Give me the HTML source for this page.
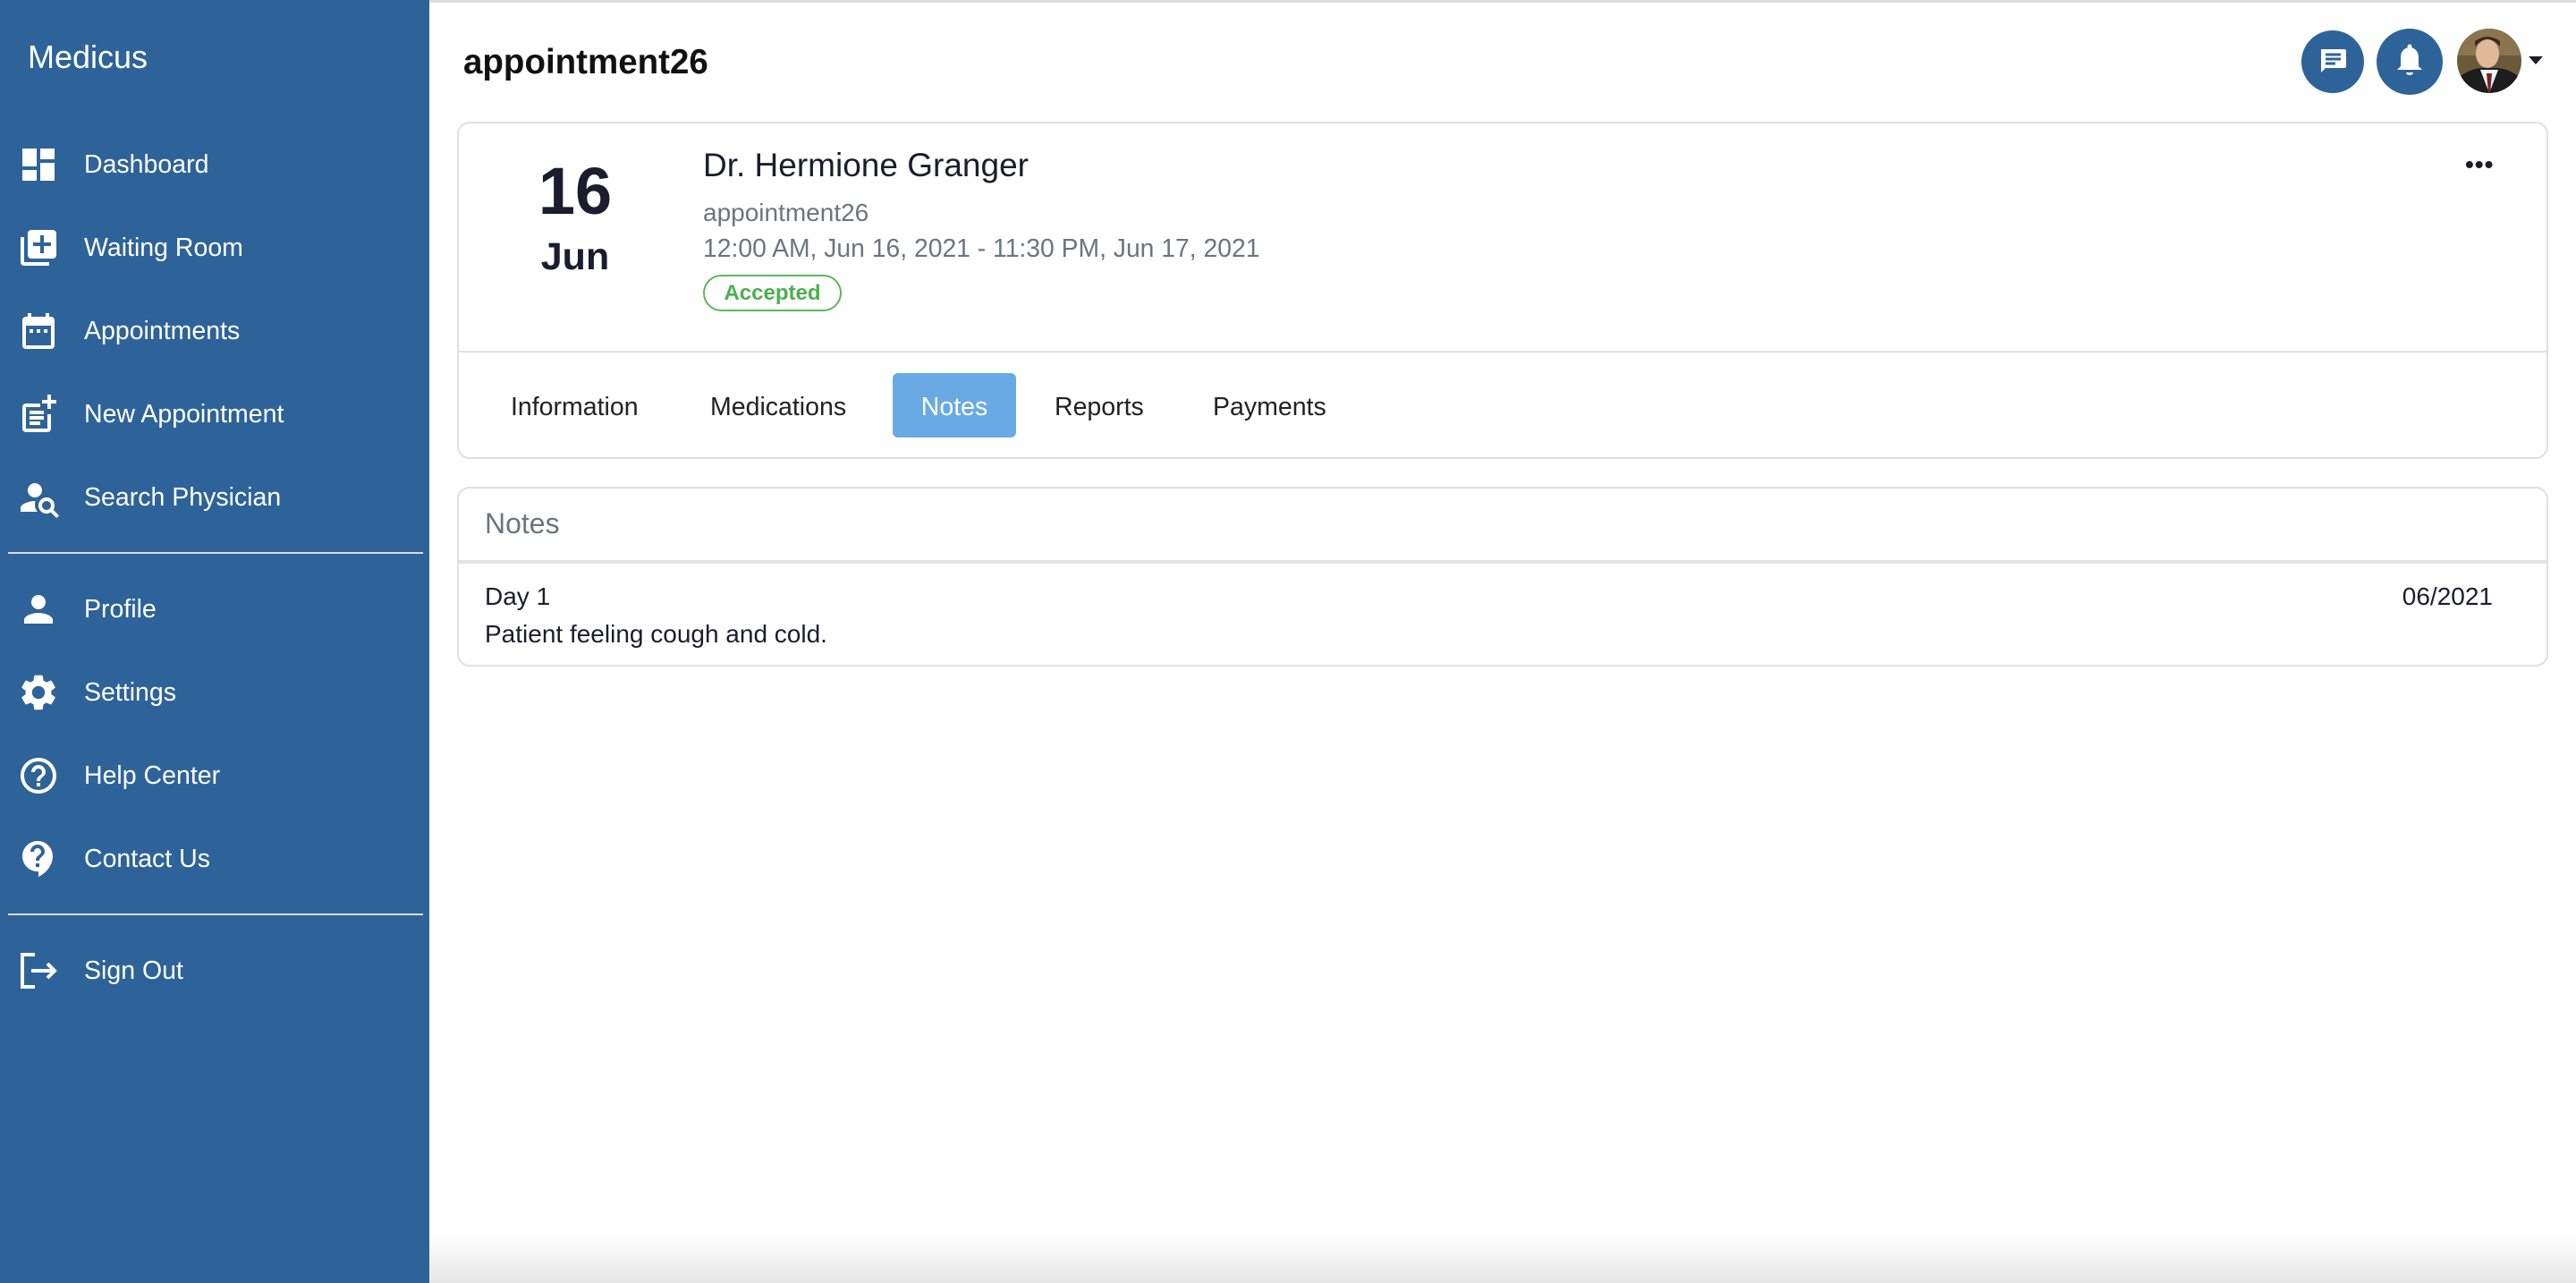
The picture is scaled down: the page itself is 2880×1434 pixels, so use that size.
<!DOCTYPE html>
<html><head><meta charset="utf-8"><style>
*{margin:0;padding:0;box-sizing:border-box}
body{width:2880px;height:1434px;overflow:hidden;background:#fff;font-family:"Liberation Sans",sans-serif;position:relative;color:#1c1c2e}
.a{position:absolute;white-space:nowrap}
#side{position:absolute;left:0;top:0;width:480px;height:1434px;background:#2e6399}
.mi{position:absolute;left:94px;font-size:28.5px;color:#fff;line-height:40px}
.ic{position:absolute;left:19px;width:48px;height:48px}
.hr{position:absolute;left:9px;width:464px;height:2px;background:#d8dde6}
.card{position:absolute;border:2px solid #e0e0e0;border-radius:14px;background:#fff}
.tab{position:absolute;font-size:28.5px;line-height:40px;top:435px;color:#222}
</style></head><body>
<div class="a" style="left:0;top:0;width:2880px;height:3px;background:#ddd"></div>
<div id="side">
<div class="a" style="left:31px;top:42px;font-size:36px;color:#fff;line-height:44px">Medicus</div>
<svg class="ic" style="top:160px" viewBox="0 0 24 24" fill="#fff"><path d="M3 13h8V3H3v10zm0 8h8v-6H3v6zm10 0h8V11h-8v10zm0-18v6h8V3h-8z"/></svg>
<div class="mi" style="top:164px">Dashboard</div>
<svg class="ic" style="top:253px" viewBox="0 0 24 24" fill="#fff"><path d="M4 6H2v14c0 1.1.9 2 2 2h14v-2H4V6zm16-4H8c-1.1 0-2 .9-2 2v12c0 1.1.9 2 2 2h12c1.1 0 2-.9 2-2V4c0-1.1-.9-2-2-2zm-1 9h-4v4h-2v-4H9V9h4V5h2v4h4v2z"/></svg>
<div class="mi" style="top:257px">Waiting Room</div>
<svg class="ic" style="top:346px" viewBox="0 0 24 24" fill="#fff"><path d="M19 4h-1V2h-2v2H8V2H6v2H5c-1.1 0-2 .9-2 2v14c0 1.1.9 2 2 2h14c1.1 0 2-.9 2-2V6c0-1.1-.9-2-2-2zm0 16H5V9h14v11zM7 11h2v2H7zm4 0h2v2h-2zm4 0h2v2h-2z"/></svg>
<div class="mi" style="top:350px">Appointments</div>
<svg class="ic" style="top:439px" viewBox="0 0 24 24" fill="#fff"><path d="M19 1v3h3v2h-3v3h-2V6h-3V4h3V1h2zM17 20H5V8h8V6H5c-1.1 0-2 .9-2 2v12c0 1.1.9 2 2 2h12c1.1 0 2-.9 2-2v-8h-2v8zM7 10h8v2H7zm0 3h8v2H7zm0 3h6v2H7z"/></svg>
<div class="mi" style="top:443px">New Appointment</div>
<svg class="ic" style="top:532px" viewBox="0 0 24 24" fill="#fff"><circle cx="10" cy="8" r="4"/><path d="M10.3 14C7 14 2 15.5 2 18v2h9.5A6 6 0 0 1 10.3 14z"/><path d="M20.3 18.9c.4-.7.7-1.5.7-2.4 0-2.5-2-4.5-4.5-4.5S12 14 12 16.5s2 4.5 4.5 4.5c.9 0 1.7-.3 2.4-.7l3.2 3.2 1.4-1.4-3.2-3.2zM16.5 19c-1.4 0-2.5-1.1-2.5-2.5s1.1-2.5 2.5-2.5 2.5 1.1 2.5 2.5-1.1 2.5-2.5 2.5z"/></svg>
<div class="mi" style="top:536px">Search Physician</div>
<div class="hr" style="top:617px"></div>
<svg class="ic" style="top:657px" viewBox="0 0 24 24" fill="#fff"><path d="M12 12c2.2 0 4-1.8 4-4s-1.8-4-4-4-4 1.8-4 4 1.8 4 4 4zm0 2c-2.7 0-8 1.3-8 4v2h16v-2c0-2.7-5.3-4-8-4z"/></svg>
<div class="mi" style="top:661px">Profile</div>
<svg class="ic" style="top:750px" viewBox="0 0 24 24" fill="#fff"><path d="M19.14 12.94c.04-.3.06-.61.06-.94 0-.32-.02-.64-.07-.94l2.03-1.58a.49.49 0 0 0 .12-.61l-1.92-3.32a.49.49 0 0 0-.59-.22l-2.39.96c-.5-.38-1.030-.7-1.62-.94l-.36-2.54a.48.48 0 0 0-.48-.41h-3.84c-.24 0-.43.17-.47.41l-.36 2.54c-.59.24-1.13.57-1.62.94l-2.39-.96a.49.49 0 0 0-.59.22L2.74 8.87c-.12.21-.08.47.12.61l2.03 1.58c-.05.3-.09.63-.09.94s.02.64.07.94l-2.03 1.58a.49.49 0 0 0-.12.61l1.92 3.32c.12.22.37.29.59.22l2.39-.96c.5.38 1.03.7 1.62.94l.36 2.54c.05.24.24.41.48.41h3.84c.24 0 .44-.17.47-.41l.36-2.54c.59-.24 1.13-.56 1.62-.94l2.39.96c.22.08.47 0 .59-.22l1.92-3.32c.12-.22.07-.47-.12-.61l-2.010-1.58zM12 15.6c-1.98 0-3.6-1.62-3.6-3.6s1.62-3.6 3.6-3.6 3.6 1.62 3.6 3.6-1.62 3.6-3.6 3.6z"/></svg>
<div class="mi" style="top:754px">Settings</div>
<svg class="ic" style="top:843px" viewBox="0 0 24 24" fill="#fff"><path d="M11 18h2v-2h-2v2zm1-16C6.48 2 2 6.48 2 12s4.48 10 10 10 10-4.48 10-10S17.52 2 12 2zm0 18c-4.41 0-8-3.59-8-8s3.59-8 8-8 8 3.59 8 8-3.59 8-8 8zm0-14c-2.21 0-4 1.79-4 4h2c0-1.1.9-2 2-2s2 .9 2 2c0 2-3 1.75-3 5h2c0-2.25 3-2.5 3-5 0-2.21-1.790-4-4-4z"/></svg>
<div class="mi" style="top:847px">Help Center</div>
<svg class="ic" style="top:936px" viewBox="0 0 24 24" fill="#fff"><path d="M11.5 2C6.81 2 3 5.81 3 10.5S6.81 19 11.5 19h.5v3c4.86-2.34 8-7 8-11.5C20 5.81 16.19 2 11.5 2zm1 14.5h-2v-2h2v2zm0-3.5h-2c0-3.25 3-3 3-5 0-1.1-.9-2-2-2s-2 .9-2 2h-2c0-2.21 1.79-4 4-4s4 1.79 4 4c0 2.5-3 2.75-3 5z"/></svg>
<div class="mi" style="top:940px">Contact Us</div>
<div class="hr" style="top:1021px"></div>
<svg class="ic" style="top:1061px" viewBox="0 0 24 24" fill="none" stroke="#fff" stroke-width="2"><path d="M10 3H3v18h7"/><path d="M8 12h13M17 8l4 4-4 4"/></svg>
<div class="mi" style="top:1065px">Sign Out</div>
</div>

<div class="a" style="left:518px;top:48px;font-size:38.5px;font-weight:bold;line-height:44px;color:#111">appointment26</div>
<svg class="a" style="left:2573px;top:34px" width="70" height="70" viewBox="0 0 70 70"><circle cx="35" cy="35" r="35" fill="#2e6399"/><path d="M22 21h26a2 2 0 0 1 2 2v17a2 2 0 0 1-2 2H27l-5 5z" fill="#fff"/><path d="M27 27h17M27 32h17M27 37h11" stroke="#2e6399" stroke-width="3"/></svg>
<svg class="a" style="left:2657px;top:32px" width="74" height="74" viewBox="0 0 74 74"><circle cx="37" cy="37" r="37" fill="#2e6399"/><path d="M37 21c-6 0-10 5-10 11v10l-4 4h28l-4-4V32c0-6-4-11-10-11z" fill="#fff"/><circle cx="37" cy="20" r="2.5" fill="#fff"/><path d="M33 49a4 3 0 0 0 8 0z" fill="#fff"/></svg>
<svg class="a" style="left:2747px;top:32px" width="72" height="72" viewBox="0 0 72 72"><defs><clipPath id="c"><circle cx="36" cy="36" r="36"/></clipPath></defs><g clip-path="url(#c)"><rect width="72" height="72" fill="#6b5a3a"/><rect x="0" y="0" width="72" height="30" fill="#8a7550"/><ellipse cx="34" cy="28" rx="13" ry="16" fill="#e0b89a"/><path d="M20 20q14-16 28 0v-6q-14-10-28 0z" fill="#3a2a1c"/><path d="M0 72V56q16-14 36-12 20-2 36 12v16z" fill="#1d1d1d"/><path d="M26 46l10 26 10-26z" fill="#f2f2f2"/><path d="M33 50h6l-2 22h-2z" fill="#7a2020"/></g></svg>
<svg class="a" style="left:2827px;top:63px" width="16" height="10"><path d="M0 0h16L8 9z" fill="#1c1c2e"/></svg>

<div class="card" style="left:511px;top:136px;width:2338px;height:377px"></div>
<div class="a" style="left:511px;top:392px;width:2338px;height:2px;background:#e2e2e2"></div>
<div class="a" style="left:543px;top:172px;width:200px;text-align:center;font-size:74px;font-weight:bold;line-height:84px;color:#1c1c2e">16</div>
<div class="a" style="left:543px;top:262px;width:200px;text-align:center;font-size:43px;font-weight:bold;line-height:50px;color:#1c1c2e">Jun</div>
<div class="a" style="left:786px;top:164px;font-size:37px;line-height:42px;color:#1c1c2e">Dr. Hermione Granger</div>
<div class="a" style="left:786px;top:221px;font-size:28px;line-height:34px;color:#6c757d">appointment26</div>
<div class="a" style="left:786px;top:260px;font-size:28.3px;line-height:34px;color:#6c757d">12:00 AM, Jun 16, 2021 - 11:30 PM, Jun 17, 2021</div>
<div class="a" style="left:786px;top:307px;width:155px;height:41px;border:2px solid #5cb85c;border-radius:21px;text-align:center;font-size:24px;font-weight:bold;color:#4caf50;line-height:37px">Accepted</div>
<div class="a" style="left:2756px;top:172px;font-size:28px;font-weight:bold;line-height:24px;color:#1c1c2e;letter-spacing:1px">•••</div>

<div class="tab" style="left:571px">Information</div>
<div class="tab" style="left:794px">Medications</div>
<div class="a" style="left:998px;top:417px;width:138px;height:72px;background:#6aaae4;border-radius:6px"></div>
<div class="tab" style="left:998px;width:138px;text-align:center;color:#fff">Notes</div>
<div class="tab" style="left:1179px">Reports</div>
<div class="tab" style="left:1356px">Payments</div>

<div class="card" style="left:511px;top:544px;width:2338px;height:201px"></div>
<div class="a" style="left:513px;top:626px;width:2334px;height:4px;background:#e2e2e2"></div>
<div class="a" style="left:542px;top:565px;font-size:32px;line-height:40px;color:#6c757d">Notes</div>
<div class="a" style="left:542px;top:650px;font-size:28px;line-height:34px">Day 1</div>
<div class="a" style="left:542px;top:692px;font-size:28px;line-height:34px">Patient feeling cough and cold.</div>
<div class="a" style="right:93px;top:650px;font-size:28px;line-height:34px">06/2021</div>

<div class="a" style="left:480px;top:1380px;width:2400px;height:54px;background:linear-gradient(#fff,#e6e6e6)"></div>
</body></html>
